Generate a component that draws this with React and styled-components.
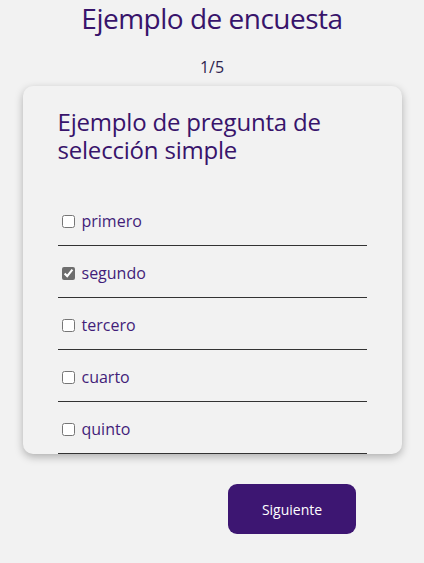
import React, { useState } from 'react'
import styled, { createGlobalStyle } from 'styled-components'

const GlobalStyle = createGlobalStyle`
	html, body {
		margin: 0;
		padding: 0;
		background-color: #f2f2f2;
	}
	body {
		font-family: 'Open Sans', 'Noto Sans', sans-serif;
		color: #3c1870;
	}
`

const Page = styled.main`
	display: flex;
	flex-direction: column;
	align-items: center;
	min-height: 563px;
`

const Title = styled.h1`
	margin: 0;
	font-size: 28px;
	line-height: 37px;
	font-weight: 400;
	letter-spacing: -0.5px;
	color: #38146b;
`

const Counter = styled.p`
	margin: 20px 0 9px;
	font-size: 16px;
	line-height: 20px;
	color: #2e2450;
`

const Card = styled.section`
	box-sizing: border-box;
	width: 379px;
	padding: 22px 35px 0;
	border-radius: 10px;
	background-color: #f2f2f2;
	box-shadow: 0px 3px 8px rgba(0, 0, 0, 0.28);
`

const Question = styled.h2`
	margin: 0 0 30px;
	font-size: 24px;
	line-height: 28px;
	font-weight: 400;
	letter-spacing: -0.2px;
	color: #38146b;
`

const Options = styled.ul`
	list-style: none;
	margin: 0;
	padding: 0;
`

const Option = styled.li`
	display: flex;
	align-items: center;
	padding: 17px 0 14px;
	line-height: 20px;
	border-bottom: 1px solid #333;
`

const Check = styled.input`
	width: 13px;
	height: 13px;
	margin: 0 7px 0 4px;
	accent-color: #6e6e6e;
`

const Label = styled.label`
	font-size: 16px;
	color: #421d79;
`

const Footer = styled.div`
	align-self: stretch;
	display: flex;
	justify-content: flex-end;
	padding: 30px 68px 0 0;
`

const Button = styled.button`
	width: 128px;
	height: 50px;
	border: none;
	border-radius: 9px;
	background-color: #3d1672;
	color: #fff;
	font-family: inherit;
	font-size: 14px;
	cursor: pointer;
`

const options = ['primero', 'segundo', 'tercero', 'cuarto', 'quinto']

const App = () => {
	const [selected, setSelected] = useState(['segundo'])

	const toggle = (value) => {
		setSelected((prev) => (prev.includes(value) ? prev.filter((v) => v !== value) : [...prev, value]))
	}

	return (
		<>
			<GlobalStyle />
			<Page>
				<Title>Ejemplo de encuesta</Title>
				<Counter>1/5</Counter>
				<Card>
					<Question>Ejemplo de pregunta de selección simple</Question>
					<Options>
						{options.map((opt) => (
							<Option key={opt}>
								<Check
									type='checkbox'
									id={opt}
									checked={selected.includes(opt)}
									onChange={() => toggle(opt)}
								/>
								<Label htmlFor={opt}>{opt}</Label>
							</Option>
						))}
					</Options>
				</Card>
				<Footer>
					<Button type='button'>Siguiente</Button>
				</Footer>
			</Page>
		</>
	)
}

export default App
